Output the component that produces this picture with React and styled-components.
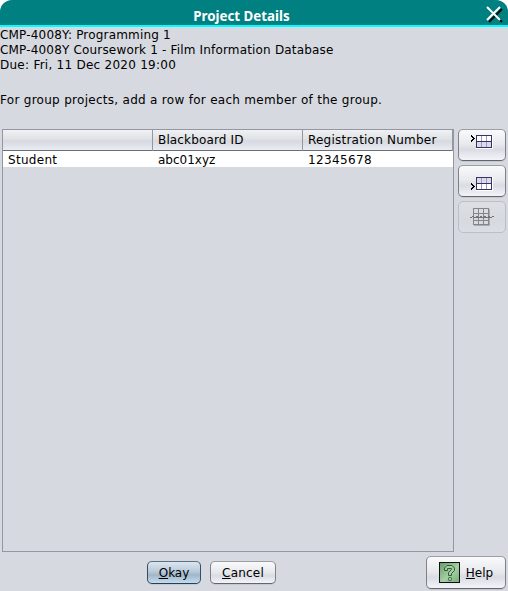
import React from "react";
import styled, { createGlobalStyle } from "styled-components";

const Global = createGlobalStyle`
  * { box-sizing: border-box; }
  body { margin: 0; background: #fff; overflow: hidden; }
`;

const Dialog = styled.div`
  width: 508px;
  height: 591px;
  display: flex;
  flex-direction: column;
  background: #d6d9df;
  border-radius: 12px 12px 0 0;
  overflow: hidden;
  color: #000;
  font: 12px/15px "DejaVu Sans", sans-serif;
  white-space: nowrap;
`;

const TitleBar = styled.header`
  flex: none;
  height: 27px;
  display: grid;
  grid-template-columns: 1fr 23px;
  align-items: center;
  background: #008080;
  border-bottom: 2px solid #00ffff;
`;

const Title = styled.h1`
  margin: 0;
  padding: 7px 2px 0 0;
  text-align: center;
  color: #fff;
  font: bold 13.33px/19px "Noto Sans", sans-serif;
`;

const Close = styled.button`
  display: flex;
  padding: 2px 0 0;
  border: 0;
  background: none;
`;

const Info = styled.div`
  flex: none;
  height: 102px;
  padding-top: 1px;
`;

const Line = styled.p`
  margin: ${(p) => p.$gap || 0}px 0 0;
  letter-spacing: ${(p) => p.$track || 0}px;
`;

const Main = styled.main`
  display: flex;
  gap: 4px;
  height: 423px;
  padding: 0 2px;
`;

const Table = styled.div`
  width: 452px;
  border: 1px solid #9297a1;
`;

const Row = styled.div`
  display: grid;
  grid-template-columns: 150px 150px 150px;
  height: ${(p) => (p.$head ? 21 : 16)}px;
  background: ${(p) => (p.$head ? "linear-gradient(#f0f1f3, #dfe2e6 45%, #d6d9df 55%, #e9ecf2)" : "#fff")};
  border-bottom: ${(p) => (p.$head ? "1px solid #686f7b" : "0")};
`;

const Cell = styled.div`
  padding-left: 5px;
  line-height: ${(p) => (p.$head ? 21 : 19)}px;
  letter-spacing: ${(p) => p.$track || 0}px;
  border-right: ${(p) => (p.$head ? "1px solid #9297a1" : "0")};
`;

const Tools = styled.div`
  display: flex;
  flex-direction: column;
  gap: 4px;
`;

const Button = styled.button`
  display: flex;
  align-items: center;
  justify-content: center;
  width: ${(p) => p.$w}px;
  height: ${(p) => p.$h}px;
  padding: 0;
  border: 1px solid #7b7f87;
  border-color: #9b9ea4 #7e8186 #62656a;
  border-radius: 5px;
  background: linear-gradient(#fafafc, #e7e9ed 48%, #d9dce2 65%, #f2f4fa);
  box-shadow: 0 1px 0 #c6c9d0;
  color: #000;
  font: inherit;
`;

const PrimaryButton = styled(Button)`
  border-color: #5b7184 #344d62 #263f54;
  background: linear-gradient(#dce6ef, #b8cad9 45%, #a0b7c9 62%, #c4dcef);
`;

const DisabledButton = styled(Button)`
  border-color: #bcbfc4;
  background: linear-gradient(#dddfe5, #d6d9df 60%, #dadde3);
  box-shadow: none;
`;

const HelpButton = styled(Button)`
  gap: 6px;
`;

const Mnemonic = styled.span`
  text-decoration: underline;
  text-decoration-thickness: 1px;
  text-underline-offset: 1px;
`;

const Label = styled.span`
  padding-top: 1px;
  letter-spacing: ${(p) => p.$track || 0}px;
`;

const Footer = styled.footer`
  flex: 1;
  display: flex;
  align-items: flex-start;
  gap: 9px;
  padding: 9px 2px 0 147px;
`;

const HelpSlot = styled.div`
  margin: -5px 0 0 auto;
`;

function CloseIcon() {
  return (
    <svg width="18" height="18" fill="none" strokeWidth="2">
      <path d="M4 17 L17 4 M5 5 L17 17" stroke="#001010" />
      <path d="M2 15 L15 2 M2 2 L15 15" stroke="#fff" />
    </svg>
  );
}

function InsertIcon({ below }) {
  return (
    <svg width="24" height="20" shapeRendering="crispEdges">
      <g transform={below ? "translate(0 6)" : undefined}>
        <rect x="6" y="0" width="17" height="14" fill="#fff" />
        <rect x="7" y={below ? 1 : 7} width="14" height="5" fill="#dadbe8" />
        <path d="M11.5 1V12M16.5 1V12" stroke="#9999cc" fill="none" />
        <path d="M7 6.5H21" stroke="#333366" fill="none" />
        <rect x="6.5" y=".5" width="15" height="12" fill="none" stroke="#333366" />
      </g>
      <path
        transform={below ? "translate(0 12)" : undefined}
        d="M1 0h1v1h1v1h1v1h1v1H4v1H3v1H2v1H1V5h1V4h1V3H2V2H1z"
        fill="#000"
      />
    </svg>
  );
}

function DeleteIcon() {
  return (
    <svg width="24" height="20" fill="none" shapeRendering="crispEdges">
      <path d="M4 18.5H20M19.5 2V19" stroke="#aaabae" />
      <path d="M3.5 1.5h15v16h-15zM8.5 2v16M13.5 2v16M3 6.5h16M3 13.5h16" stroke="#858689" />
      <path d="M0 10.5h2m2 0h2m2 0h2m2 0h2m2 0h2m2 0h2M2 9.5h2m2 0h2m2 0h2m2 0h2m2 0h2m2 0h3M3 10.5h18" stroke="#727377" />
    </svg>
  );
}

const HelpArt = styled.svg`
  margin-bottom: 1px;
`;

function HelpIcon() {
  return (
    <HelpArt width="21" height="21">
      <defs>
        <linearGradient id="green" x2="1" y2="1">
          <stop stopColor="#669966" />
          <stop offset=".55" stopColor="#a4d0a4" />
          <stop offset="1" stopColor="#78ab78" />
        </linearGradient>
      </defs>
      <rect x=".5" y=".5" width="20" height="20" fill="url(#green)" stroke="#111" />
      <g fill="#a3cda3" stroke="#365b36">
        <path d="M5.5 8.5V6L8 3.5H13L15.5 6V8.5L12.5 11.5V13.5H9.5V10.5L12.5 7.5V6.5H8.5V8.5z" />
        <rect x="9.5" y="15.5" width="3" height="3" rx="1" />
      </g>
    </HelpArt>
  );
}

export default function App() {
  return (
    <>
      <Global />
      <Dialog>
        <TitleBar>
          <Title>Project Details</Title>
          <Close aria-label="Close"><CloseIcon /></Close>
        </TitleBar>
        <Info>
          <Line $track={0.18}>CMP-4008Y: Programming 1</Line>
          <Line $track={0.175}>CMP-4008Y Coursework 1 - Film Information Database</Line>
          <Line $track={0.26}>Due: Fri, 11 Dec 2020 19:00</Line>
          <Line $gap={20} $track={0.29}>For group projects, add a row for each member of the group.</Line>
        </Info>
        <Main>
          <Table>
            <Row $head>
              <Cell $head />
              <Cell $head $track={0.15}>Blackboard ID</Cell>
              <Cell $head $track={0.22}>Registration Number</Cell>
            </Row>
            <Row>
              <Cell $track={0.3}>Student</Cell>
              <Cell>abc01xyz</Cell>
              <Cell $track={0.37}>12345678</Cell>
            </Row>
          </Table>
          <Tools>
            <Button $w={48} $h={32} aria-label="Insert row above"><InsertIcon /></Button>
            <Button $w={48} $h={32} aria-label="Insert row below"><InsertIcon below /></Button>
            <DisabledButton $w={48} $h={32} aria-label="Delete row"><DeleteIcon /></DisabledButton>
          </Tools>
        </Main>
        <Footer>
          <PrimaryButton $w={54} $h={23}><Label><Mnemonic>O</Mnemonic>kay</Label></PrimaryButton>
          <Button $w={66} $h={23}><Label $track={0.2}><Mnemonic>C</Mnemonic>ancel</Label></Button>
          <HelpSlot>
            <HelpButton $w={80} $h={33}><HelpIcon /><Label><Mnemonic>H</Mnemonic>elp</Label></HelpButton>
          </HelpSlot>
        </Footer>
      </Dialog>
    </>
  );
}
